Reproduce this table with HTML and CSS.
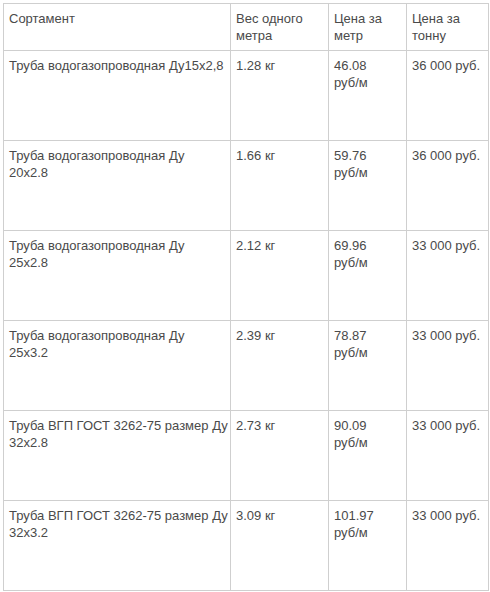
FILE: index.html
```html
<!DOCTYPE html>
<html lang="ru">
<head>
<meta charset="utf-8">
<link rel="stylesheet" href="styles.css">
</head>
<body>
<div class="wrap">
<table class="price">
<colgroup>
<col class="c1"><col class="c2"><col class="c3"><col class="c4">
</colgroup>
<thead>
<tr class="head"><th>Сортамент</th><th>Вес одного<br>метра</th><th>Цена за<br>метр</th><th>Цена за<br>тонну</th></tr>
</thead>
<tbody>
<tr><td>Труба водогазопроводная Ду15x2,8</td><td>1.28 кг</td><td>46.08<br>руб/м</td><td>36 000 руб.</td></tr>
<tr><td>Труба водогазопроводная Ду<br>20x2.8</td><td>1.66 кг</td><td>59.76<br>руб/м</td><td>36 000 руб.</td></tr>
<tr><td>Труба водогазопроводная Ду<br>25x2.8</td><td>2.12 кг</td><td>69.96<br>руб/м</td><td>33 000 руб.</td></tr>
<tr><td>Труба водогазопроводная Ду<br>25x3.2</td><td>2.39 кг</td><td>78.87<br>руб/м</td><td>33 000 руб.</td></tr>
<tr><td>Труба ВГП ГОСТ 3262-75 размер Ду<br>32x2.8</td><td>2.73 кг</td><td>90.09<br>руб/м</td><td>33 000 руб.</td></tr>
<tr><td>Труба ВГП ГОСТ 3262-75 размер Ду<br>32x3.2</td><td>3.09 кг</td><td>101.97<br>руб/м</td><td>33 000 руб.</td></tr>
</tbody>
</table>
</div>
</body>
</html>
```
FILE: styles.css
```css
html, body {
  margin: 0;
  padding: 0;
  background: #fff;
}
.wrap {
  padding: 3px 0 0 3px;
}
.price {
  border-collapse: collapse;
  table-layout: fixed;
  width: 485px;
  font-family: "Liberation Sans", Arial, sans-serif;
  font-size: 13px;
  line-height: 17px;
  color: #4a4a4a;
}
.c1 { width: 227px; }
.c2 { width: 98px; }
.c3 { width: 78px; }
.c4 { width: 82px; }
.price th, .price td {
  border: 1px solid #cfcfcf;
  padding: 6px 1px 5px 5px;
  text-align: left;
  vertical-align: top;
  font-weight: normal;
  white-space: nowrap;
  overflow: hidden;
}
.price tr.head { height: 47px; }
.price tbody tr { height: 90px; }
```
